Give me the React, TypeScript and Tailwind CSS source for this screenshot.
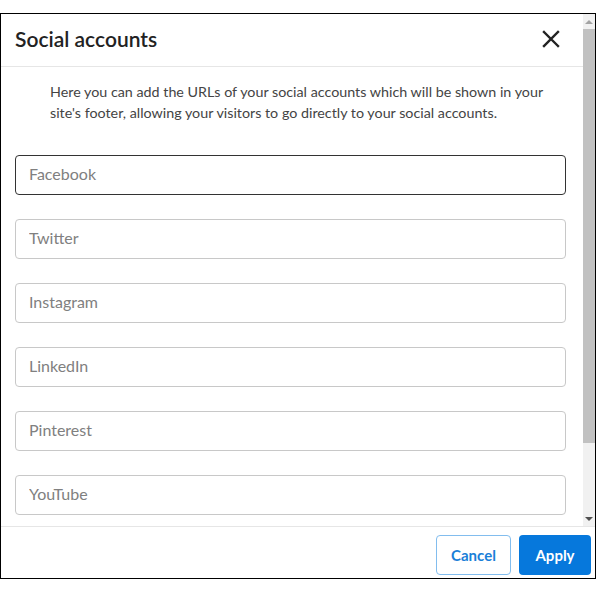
import React from "react";

const FIELDS = ["Facebook", "Twitter", "Instagram", "LinkedIn", "Pinterest", "YouTube"];

function CloseIcon() {
  return (
    <svg width="18" height="18" viewBox="0 0 18 18" fill="none">
      <path d="M2 2L16 16M16 2L2 16" stroke="#222" strokeWidth="2.4" strokeLinecap="square" />
    </svg>
  );
}

function Scrollbar() {
  return (
    <div className="flex w-[12px] shrink-0 flex-col bg-[#f1f1f1]">
      <div className="flex h-[15px] items-center justify-center">
        <div className="h-0 w-0 border-x-[4px] border-b-[4px] border-x-transparent border-b-[#a3a3a3]" />
      </div>
      <div className="h-[414px] bg-[#c1c1c1]" />
      <div className="flex-1" />
      <div className="flex h-[15px] items-center justify-center">
        <div className="h-0 w-0 border-x-[4px] border-t-[4px] border-x-transparent border-t-[#505050]" />
      </div>
    </div>
  );
}

export default function App() {
  return (
    <div className="bg-white pt-[13px]" style={{ fontFamily: "Lato, 'Open Sans', sans-serif" }}>
      <div className="flex h-[566px] w-[596px] flex-col border border-black bg-white">
        <div className="flex h-[512px] min-h-0">
          <div className="min-w-0 flex-1 overflow-hidden">
            <div className="flex h-[53px] items-center justify-between border-b border-[#e6e6e6] pb-[3px] pl-[14px] pr-[22px]">
              <h2 className="text-[21px] font-semibold text-[#222]">Social accounts</h2>
              <button type="button" className="flex h-[20px] w-[20px] items-center justify-center">
                <CloseIcon />
              </button>
            </div>
            <div className="pl-[14px] pr-[17px] pt-[14px]">
              <p className="pl-[35px] text-[14.3px] leading-[21px] text-[#444]">
                Here you can add the URLs of your social accounts which will be shown in your
                <br />
                site's footer, allowing your visitors to go directly to your social accounts.
              </p>
              <div className="mt-[32px] flex flex-col gap-[24px]">
                {FIELDS.map((f, i) => (
                  <input
                    key={f}
                    placeholder={f}
                    className={`h-[40px] w-full rounded-[4px] border bg-white px-[13px] pb-[3px] text-[16px] text-[#333] outline-none placeholder:text-[#808080] ${
                      i === 0 ? "border-[#333]" : "border-[#c8c8c8]"
                    }`}
                  />
                ))}
              </div>
            </div>
          </div>
          <Scrollbar />
        </div>
        <div className="flex flex-1 items-start justify-end gap-[8px] border-t border-[#e6e6e6] pr-[4px] pt-[8px]">
          <button
            type="button"
            className="h-[40px] w-[75px] rounded-[4px] border border-[#82bdee] bg-white text-[15px] font-bold text-[#1a7fd8]"
          >
            Cancel
          </button>
          <button
            type="button"
            className="h-[40px] w-[72px] rounded-[4px] bg-[#0678dc] text-[15px] font-bold text-white"
          >
            Apply
          </button>
        </div>
      </div>
    </div>
  );
}
